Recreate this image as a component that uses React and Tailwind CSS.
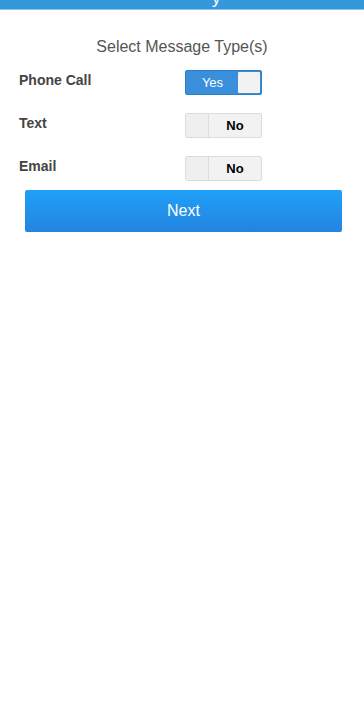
import React, { useState } from 'react';

const Toggle = ({ on, onClick }) => {
  if (on) {
    return (
      <button onClick={onClick} className="flex h-[25px] w-[77px] rounded-[2px] border border-[#2f7fc4] bg-[#3a8fdc] p-[1px]">
        <span className="flex flex-1 items-center justify-center text-[13px] text-white">Yes</span>
        <span className="h-full w-[22px] rounded-[1px] bg-[#f2f2f2]"></span>
      </button>
    );
  }
  return (
    <button onClick={onClick} className="flex h-[25px] w-[77px] rounded-[2px] border border-[#dcdcdc] bg-[#f2f2f2]">
      <span className="h-full w-[23px] border-r border-[#dcdcdc] bg-[#efefef]"></span>
      <span className="flex flex-1 items-center justify-center text-[13px] font-bold text-black">No</span>
    </button>
  );
};

const App = () => {
  const [types, setTypes] = useState({ phone: true, text: false, email: false });
  const flip = (k) => setTypes({ ...types, [k]: !types[k] });

  const rows = [
    { key: 'phone', label: 'Phone Call' },
    { key: 'text', label: 'Text' },
    { key: 'email', label: 'Email' },
  ];

  return (
    <div className="min-h-screen bg-white font-['Liberation_Sans',Arial,sans-serif]">
      {/* header, scrolled mostly out of view */}
      <div className="relative h-[9px] overflow-hidden bg-[#3598dc]">
        <span className="absolute left-[212px] top-[-14px] text-[17px] text-white">y</span>
      </div>
      <div className="h-[1px] bg-[#8cc4ec]"></div>

      <p className="mt-[25px] text-center text-[16px] text-[#555]">Select Message Type(s)</p>

      <div className="mt-[11px] flex flex-col gap-[18px]">
        {rows.map((r) => (
          <div key={r.key} className="flex items-center">
            <span className="w-[185px] pb-[4px] pl-[19px] text-[14px] font-bold text-[#444]">{r.label}</span>
            <Toggle on={types[r.key]} onClick={() => flip(r.key)} />
          </div>
        ))}
      </div>

      <div className="mt-[9px] pl-[25px] pr-[22px]">
        <button className="h-[42px] w-full rounded-[2px] bg-gradient-to-b from-[#1fa0f8] to-[#2384df] text-[16px] text-white">
          Next
        </button>
      </div>
    </div>
  );
};

export default App;
